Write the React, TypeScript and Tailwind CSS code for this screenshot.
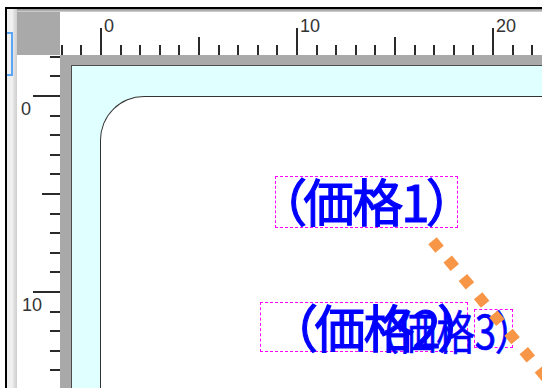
import React from "react";

const U = 19.6;

function TopRuler() {
  const ticks: React.ReactNode[] = [];
  for (let k = -2; k <= 22; k++) {
    const x = Math.round(41 + U * k);
    const y1 = k % 10 === 0 ? 16 : k % 5 === 0 ? 25 : 33;
    ticks.push(
      <line key={k} x1={x} x2={x} y1={y1} y2={43} stroke="#2a2a2a" strokeWidth={2} shapeRendering="crispEdges" />
    );
  }
  const labels = [0, 10, 20].map((k) => (
    <text key={k} x={Math.round(41 + U * k) + 3} y={20} fontFamily="'Liberation Sans', Arial, sans-serif" fontSize={18} fill="#333">
      {k}
    </text>
  ));
  return (
    <div className="bg-white overflow-hidden">
      <svg width={482} height={43} className="block">
        {ticks}
        {labels}
      </svg>
    </div>
  );
}

function LeftRuler() {
  const ticks: React.ReactNode[] = [];
  for (let k = -2; k <= 14; k++) {
    const y = Math.round(41 + U * k);
    const x1 = k % 10 === 0 ? 16 : k % 5 === 0 ? 25 : 33;
    ticks.push(
      <line key={k} y1={y} y2={y} x1={x1} x2={43} stroke="#2a2a2a" strokeWidth={2} shapeRendering="crispEdges" />
    );
  }
  const labels = [0, 10].map((k) => (
    <text key={k} x={k === 0 ? 4 : 5} y={Math.round(41 + U * k) + 19} fontFamily="'Liberation Sans', Arial, sans-serif" fontSize={18} fill="#333">
      {k}
    </text>
  ));
  return (
    <div className="bg-white overflow-hidden">
      <svg width={43} height={333} className="block">
        {ticks}
        {labels}
      </svg>
    </div>
  );
}

const jp = "font-['Noto_Sans_CJK_JP',sans-serif] [font-feature-settings:'palt'] leading-none whitespace-nowrap text-[#0000ff] font-normal";

export default function App() {
  const ux = 0.639;
  const uy = 0.769;
  const p0x = 372.5;
  const p0y = 185.8;
  return (
    <div className="relative w-[542px] h-[388px] overflow-hidden bg-white pt-[7px] pl-[5px] flex">
      <div className="flex-1 flex border-t-2 border-l-2 border-black min-w-0">
        <div className="relative w-[10px] shrink-0 flex overflow-hidden">
          <div className="w-[6px] bg-[#f0f0f0]" />
          <div className="w-[4px] bg-linear-to-r from-[#e6e6e6] to-[#cfcfcf]" />
          <div className="absolute left-[-4px] top-[23px] w-[10px] h-[44px] border-2 border-[#5aa5f5]" />
        </div>
        <div className="flex-1 flex flex-col min-w-0">
          <div className="h-[3px] bg-linear-to-b from-[#8c8c8c] to-[#d6d6d6]" />
          <div className="flex-1 grid grid-cols-[43px_1fr] grid-rows-[43px_1fr] min-h-0">
            <div className="bg-[#a9a9a9]" />
            <TopRuler />
            <LeftRuler />
            <div className="relative bg-[#a9a9a9] pl-[11px] pt-[10px] flex flex-col min-h-0 overflow-hidden">
              <div className="flex-1 flex flex-col border-l border-t border-[#4d4d4d] bg-[#e0ffff] pl-[28px] pt-[30px]">
                <div className="flex-1 bg-white border-l-[1.5px] border-t-[1.5px] border-[#333] rounded-tl-[44px]" />
              </div>

              {/* label 1 */}
              <div className="absolute left-[215px] top-[121px] w-[183px] h-[52px] border border-dashed border-[#ff00ff] flex items-center justify-center">
                <span className={`${jp} text-[51px] tracking-[-2px] pr-[2px] mb-[3px] [-webkit-text-stroke:1.1px_#0000ff]`}>（価格1）</span>
              </div>

              {/* label 2 */}
              <div className="absolute left-[200px] top-[247px] w-[208px] h-[50px] border border-dashed border-[#ff00ff] flex items-center justify-start">
                <span className={`${jp} text-[51px] tracking-[-2px] ml-[30px] mb-[2px] [-webkit-text-stroke:1.1px_#0000ff]`}>（価格2）</span>
              </div>

              {/* label 3 */}
              <div className="absolute left-[414px] top-[254px] w-[39px] h-[39px] border border-dashed border-[#ff00ff] flex items-center justify-end">
                <span className={`${jp} text-[46px] scale-x-[0.84] origin-right mr-[-4px] [-webkit-text-stroke:0.6px_#0000ff]`}>（価格3）</span>
              </div>

              <svg className="absolute left-0 top-0 pointer-events-none" width={482} height={333}>
                <line
                  x1={p0x}
                  y1={p0y}
                  x2={p0x + ux * 260}
                  y2={p0y + uy * 260}
                  stroke="#f79646"
                  strokeWidth={11}
                  strokeDasharray="11 12.8"
                />
              </svg>
            </div>
          </div>
        </div>
      </div>
    </div>
  );
}
